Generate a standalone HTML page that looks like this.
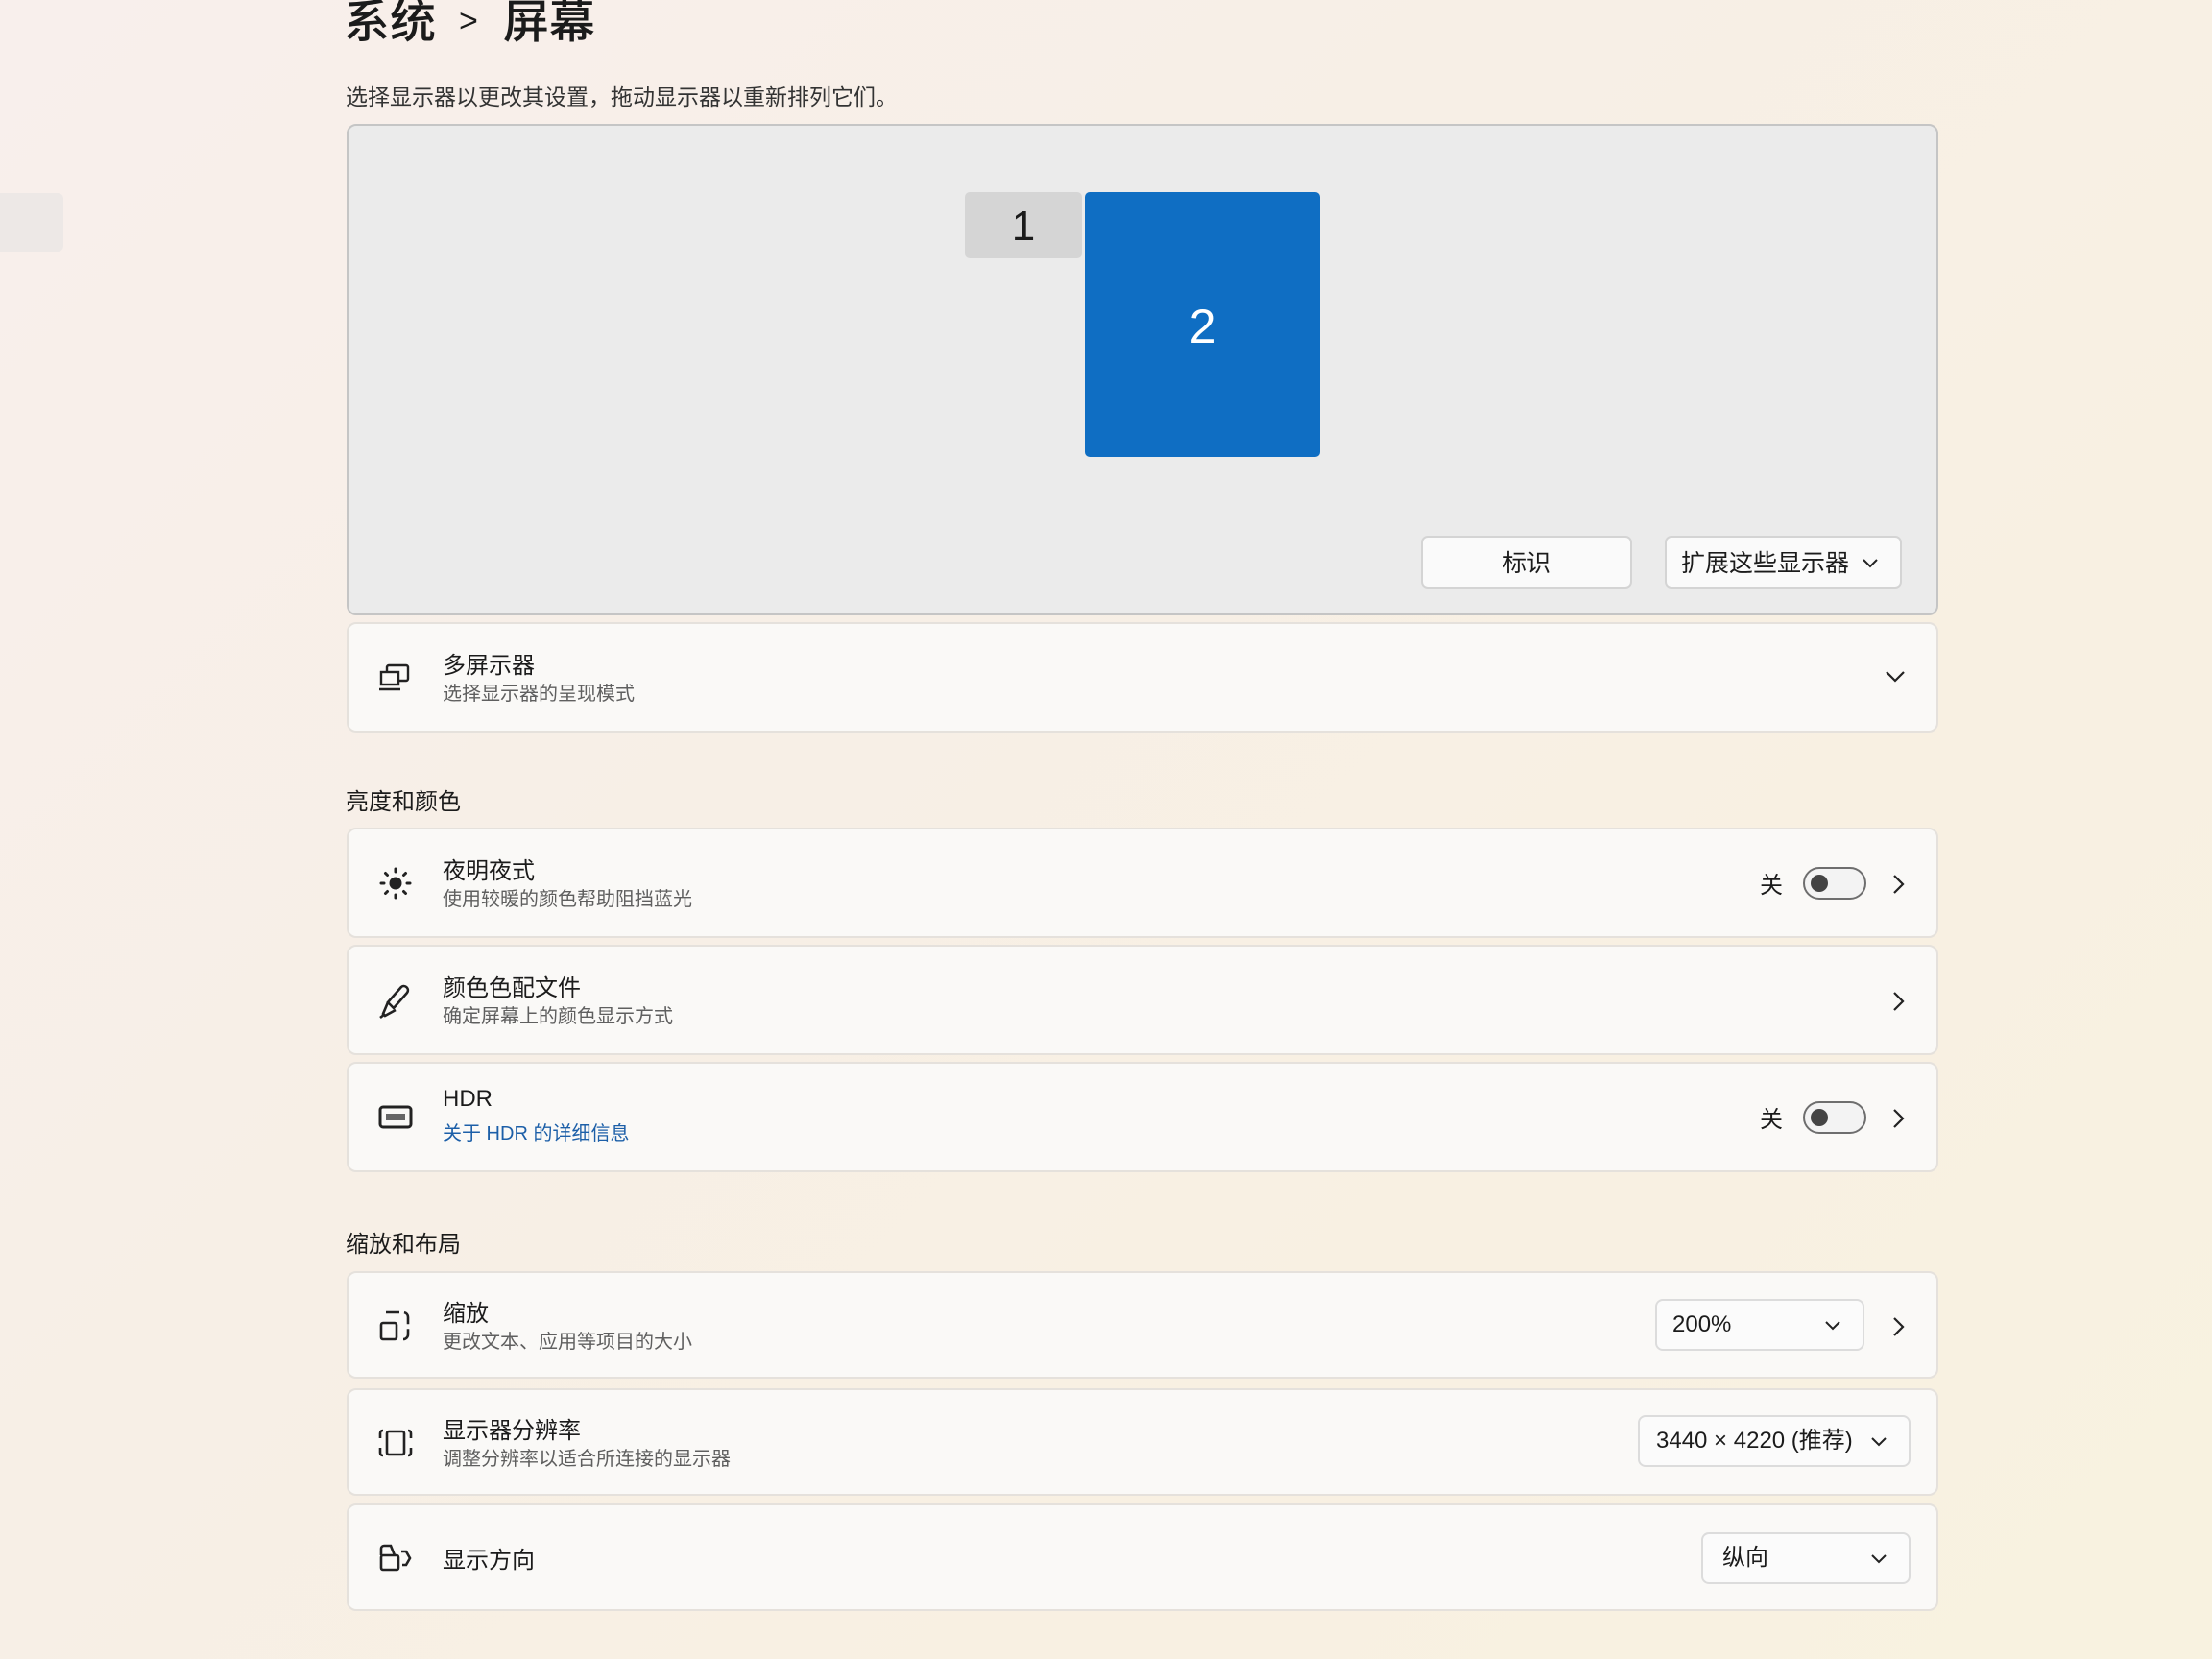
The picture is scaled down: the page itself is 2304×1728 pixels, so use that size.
<!DOCTYPE html>
<html><head><meta charset="utf-8"><style>
*{margin:0;padding:0;box-sizing:border-box}
body{width:2304px;height:1728px;overflow:hidden;position:relative;font-family:"Liberation Sans","Noto Sans CJK SC",sans-serif;color:#1b1b1b;background:linear-gradient(135deg,#f8efec 0%,#f7efe6 40%,#f8f0e2 70%,#f8f2e0 100%)}
.a{position:absolute}
.card{position:absolute;left:361px;width:1658px;background:#faf9f7;border:2px solid #e5e1dc;border-radius:10px}
.t{position:absolute;left:98px;font-size:24px;color:#1b1b1b}
.s{position:absolute;left:98px;font-size:20px;color:#5f5f5f}
.ic{position:absolute;left:31px}
.chev{position:absolute;right:32px}
.dd{position:absolute;background:#fbfbfb;border:2px solid #dcdcdc;border-radius:8px;font-size:24px}
.tog{position:absolute;left:1515px;width:66px;height:34px;border:2px solid #6e6e6e;border-radius:17px;background:#f3f3f3}
.tog::after{content:"";position:absolute;left:6px;top:6px;width:18px;height:18px;border-radius:50%;background:#444}
.off{position:absolute;left:1470px;font-size:24px}
.sec{position:absolute;left:360px;font-size:24px;color:#1b1b1b}
</style></head><body>
<div class="a" style="left:0;top:201px;width:66px;height:61px;background:#ede8e6;border-radius:0 6px 6px 0"></div>
<div class="a" style="left:358px;top:-6px;font-size:48px;font-weight:500;line-height:56px">系统<span style="font-size:34px;vertical-align:6px;margin:0 26px 0 24px">&gt;</span>屏幕</div>
<div class="a" style="left:360px;top:82px;font-size:23px;color:#333">选择显示器以更改其设置，拖动显示器以重新排列它们。</div>

<div class="a" style="left:361px;top:129px;width:1658px;height:512px;background:#ebebeb;border:2px solid #c5c5c5;border-radius:10px"></div>
<div class="a" style="left:1005px;top:200px;width:122px;height:69px;background:#d5d5d5;border-radius:5px;font-size:44px;text-align:center;line-height:72px">1</div>
<div class="a" style="left:1130px;top:200px;width:245px;height:276px;background:#0f6ec3;border-radius:5px;font-size:50px;color:#fff;text-align:center;line-height:280px">2</div>
<div class="a" style="left:1480px;top:558px;width:220px;height:55px;background:#fafafa;border:2px solid #d4d4d4;border-radius:7px;font-size:25px;text-align:center;line-height:54px">标识</div>
<div class="a" style="left:1734px;top:558px;width:247px;height:55px;background:#fafafa;border:2px solid #d4d4d4;border-radius:7px;font-size:25px;line-height:54px;padding-left:15px">扩展这些显示器<svg class="a" style="right:22px;top:21px" width="18" height="12" viewBox="0 0 18 12"><path d="M2 2l7 7 7-7" fill="none" stroke="#222" stroke-width="2"/></svg></div>

<div class="card" style="top:648px;height:115px">
<svg class="ic" style="top:40px" width="34" height="32" viewBox="0 0 34 32"><rect x="9" y="3" width="22" height="16" rx="2" fill="none" stroke="#222" stroke-width="2.4"/><rect x="3" y="10" width="18" height="13" fill="#faf9f7" stroke="#222" stroke-width="2.4"/><path d="M1 28h22" stroke="#222" stroke-width="2.4"/></svg>
<div class="t" style="top:23px">多屏示器</div><div class="s" style="top:56px">选择显示器的呈现模式</div>
<svg class="chev" style="top:48px" width="22" height="14" viewBox="0 0 22 14"><path d="M2 2l9 9 9-9" fill="none" stroke="#222" stroke-width="2.2"/></svg>
</div>

<div class="sec" style="top:815px">亮度和颜色</div>

<div class="card" style="top:862px;height:115px">
<svg class="ic" style="top:38px" width="36" height="36" viewBox="0 0 36 36"><circle cx="18" cy="18" r="6.5" fill="#222"/><g stroke="#222" stroke-width="3" stroke-linecap="round"><path d="M18 3v3M18 30v3M3 18h3M30 18h3M7.5 7.5l2 2M26.5 26.5l2 2M7.5 28.5l2-2M26.5 9.5l2-2"/></g></svg>
<div class="t" style="top:23px">夜明夜式</div><div class="s" style="top:56px">使用较暖的颜色帮助阻挡蓝光</div>
<div class="off" style="top:38px">关</div><div class="tog" style="top:39px"></div>
<svg class="chev" style="top:46px" width="14" height="22" viewBox="0 0 14 22"><path d="M2 2l9 9-9 9" fill="none" stroke="#222" stroke-width="2.2"/></svg>
</div>
<div class="card" style="top:984px;height:115px">
<svg class="ic" style="top:38px" width="36" height="38" viewBox="0 0 36 38"><path d="M24 4c4-3 9 2 6 6l-14 16-6-6z" fill="none" stroke="#222" stroke-width="2.6"/><path d="M10 20l-5 12 2 2 11-6" fill="none" stroke="#222" stroke-width="2.6"/><path d="M2 36l5-4" stroke="#222" stroke-width="2.6"/></svg>
<div class="t" style="top:23px">颜色色配文件</div><div class="s" style="top:56px">确定屏幕上的颜色显示方式</div>
<svg class="chev" style="top:46px" width="14" height="22" viewBox="0 0 14 22"><path d="M2 2l9 9-9 9" fill="none" stroke="#222" stroke-width="2.2"/></svg>
</div>
<div class="card" style="top:1106px;height:115px">
<svg class="ic" style="top:42px" width="36" height="28" viewBox="0 0 36 28"><rect x="2" y="3" width="32" height="21" rx="3" fill="none" stroke="#222" stroke-width="3"/><rect x="8" y="10" width="20" height="7" fill="#666"/></svg>
<div class="t" style="top:23px">HDR</div><div class="s" style="top:56px;color:#1c5fa8">关于 HDR 的详细信息</div>
<div class="off" style="top:38px">关</div><div class="tog" style="top:39px"></div>
<svg class="chev" style="top:46px" width="14" height="22" viewBox="0 0 14 22"><path d="M2 2l9 9-9 9" fill="none" stroke="#222" stroke-width="2.2"/></svg>
</div>

<div class="sec" style="top:1276px">缩放和布局</div>

<div class="card" style="top:1324px;height:112px">
<svg class="ic" style="top:38px" width="34" height="34" viewBox="0 0 34 34"><path d="M8 3h18a5 5 0 0 1 5 5v18a5 5 0 0 1-5 5" fill="none" stroke="#222" stroke-width="2.6" stroke-dasharray="14 5"/><rect x="3" y="14" width="16" height="17" rx="2" fill="none" stroke="#222" stroke-width="2.6"/></svg>
<div class="t" style="top:22px">缩放</div><div class="s" style="top:55px">更改文本、应用等项目的大小</div>
<div class="dd" style="left:1361px;top:27px;width:218px;height:54px;line-height:50px;padding-left:16px">200%<svg class="a" style="right:22px;top:20px" width="18" height="12" viewBox="0 0 18 12"><path d="M2 2l7 7 7-7" fill="none" stroke="#222" stroke-width="2"/></svg></div>
<svg class="chev" style="top:45px" width="14" height="22" viewBox="0 0 14 22"><path d="M2 2l9 9-9 9" fill="none" stroke="#222" stroke-width="2.2"/></svg>
</div>
<div class="card" style="top:1446px;height:112px">
<svg class="ic" style="top:38px" width="36" height="34" viewBox="0 0 36 34"><rect x="9" y="5" width="18" height="24" rx="2" fill="none" stroke="#222" stroke-width="2.6"/><path d="M5 4c-2 0-3 1-3 3v5M5 30c-2 0-3-1-3-3v-5M31 4c2 0 3 1 3 3v5M31 30c2 0 3-1 3-3v-5" fill="none" stroke="#222" stroke-width="2.6"/></svg>
<div class="t" style="top:22px">显示器分辨率</div><div class="s" style="top:55px">调整分辨率以适合所连接的显示器</div>
<div class="dd" style="left:1343px;top:26px;width:284px;height:54px;line-height:50px;padding-left:17px">3440 × 4220 (推荐)<svg class="a" style="right:22px;top:20px" width="18" height="12" viewBox="0 0 18 12"><path d="M2 2l7 7 7-7" fill="none" stroke="#222" stroke-width="2"/></svg></div>
</div>
<div class="card" style="top:1566px;height:112px">
<svg class="ic" style="top:40px" width="36" height="30" viewBox="0 0 36 30"><rect x="3" y="12" width="18" height="15" rx="2" fill="none" stroke="#222" stroke-width="2.6"/><path d="M3 12V5a3 3 0 0 1 3-3h7l4 10M24 8h5l4 7-4 7h-4" fill="none" stroke="#222" stroke-width="2.6"/></svg>
<div class="t" style="top:37px">显示方向</div>
<div class="dd" style="left:1409px;top:28px;width:218px;height:54px;line-height:50px;padding-left:20px">纵向<svg class="a" style="right:22px;top:20px" width="18" height="12" viewBox="0 0 18 12"><path d="M2 2l7 7 7-7" fill="none" stroke="#222" stroke-width="2"/></svg></div>
</div>
</body></html>
